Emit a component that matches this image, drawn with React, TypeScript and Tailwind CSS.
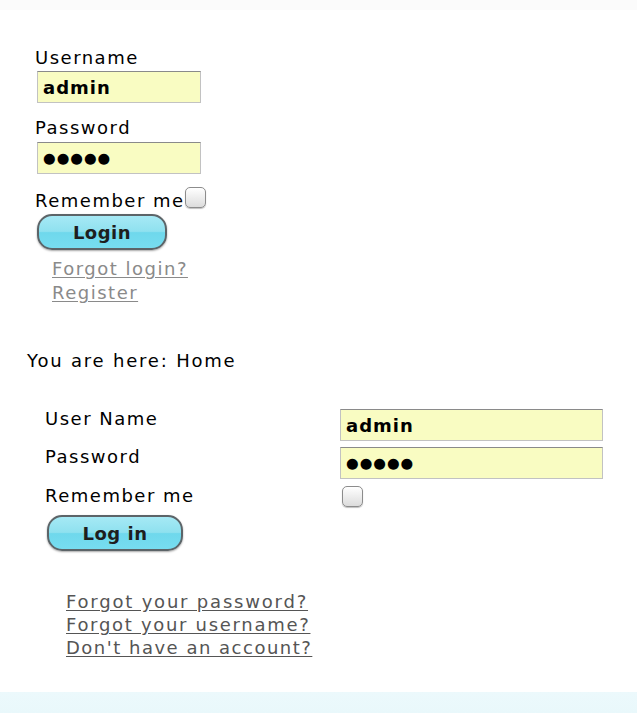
import React from 'react';

const font = "font-['DejaVu_Sans',sans-serif]";

const fieldClass =
  'h-[32px] bg-[#f9fcc2] border border-[#c2c2c2] border-t-[#8a8a8a] pl-[5px] text-[18px] font-bold text-black tracking-[1px] outline-none';

const checkClass =
  'appearance-none w-[21px] h-[21px] rounded-[5px] border border-[#8c8c8c] bg-gradient-to-b from-white to-[#dcdcdc] shadow-[0_1px_1px_rgba(0,0,0,0.25)]';

const AquaButton: React.FC<{ label: string; width: string }> = ({ label, width }) => (
  <button
    type="button"
    className={`${width} h-[36px] rounded-[15px] border-2 border-[#5c6468] bg-[linear-gradient(#a6e9f5_0%,#8fe1ef_48%,#6fd8ec_52%,#77ddf0_100%)] shadow-[0_1px_2px_rgba(0,0,0,0.35)] text-[18px] font-bold text-[#1e1e1e] tracking-[0.5px]`}
  >
    {label}
  </button>
);

const App: React.FC = () => {
  return (
    <div className={`${font} bg-white min-h-[713px] text-[18px] text-black tracking-[1.5px]`}>
      <div className="h-[10px] bg-[#fbfbfb]" />

      {/* module login */}
      <div className="pl-[35px] pt-[37px] flex flex-col items-start">
        <label className="leading-[22px]">Username</label>
        <input readOnly value="admin" className={`${fieldClass} mt-[2px] ml-[2px] w-[164px]`} />
        <label className="leading-[22px] mt-[14px]">Password</label>
        <input
          readOnly
          value="●●●●●"
          className={`${fieldClass} mt-[3px] ml-[2px] w-[164px] h-[31px] !text-[14.5px] !tracking-[1px]`}
        />
        <div className="flex items-start mt-[16px]">
          <span className="leading-[22px]">Remember me</span>
          <input type="checkbox" className={`${checkClass} -mt-[3px]`} />
        </div>
        <div className="mt-[2px] ml-[2px]">
          <AquaButton label="Login" width="w-[130px]" />
        </div>
        <div className="mt-[7px] ml-[17px] flex flex-col leading-[24px] text-[#8a8a8a]">
          <a className="underline underline-offset-[2px]">Forgot login?</a>
          <a className="underline underline-offset-[2px]">Register</a>
        </div>
      </div>

      {/* breadcrumb */}
      <div className="pl-[27px] mt-[45px] leading-[22px] tracking-[1.8px]">You are here: Home</div>

      {/* component login */}
      <div className="pl-[45px] mt-[36px]">
        <div className="flex items-start h-[38px]">
          <label className="w-[295px] leading-[22px]">User Name</label>
          <input readOnly value="admin" className={`${fieldClass} mt-[1px] w-[263px]`} />
        </div>
        <div className="flex items-start h-[39px]">
          <label className="w-[295px] leading-[22px]">Password</label>
          <input
            readOnly
            value="●●●●●"
            className={`${fieldClass} mt-[1px] w-[263px] h-[31px] !text-[14.5px] !tracking-[1px]`}
          />
        </div>
        <div className="flex items-start h-[22px]">
          <label className="w-[297px] leading-[22px]">Remember me</label>
          <input type="checkbox" className={`${checkClass} mt-[1px]`} />
        </div>
        <div className="mt-[8px] ml-[2px]">
          <AquaButton label="Log in" width="w-[136px]" />
        </div>
      </div>

      <div className="pl-[66px] mt-[39px] flex flex-col items-start leading-[23px] text-[#555]">
        <a className="underline underline-offset-[2px] tracking-[1.8px]">Forgot your password?</a>
        <a className="underline underline-offset-[2px] tracking-[1.7px]">Forgot your username?</a>
        <a className="underline underline-offset-[2px]">Don't have an account?</a>
      </div>

      <div className="mt-[33px] h-[21px] bg-[linear-gradient(#ecf9fc,#e9f8fb)]" />
    </div>
  );
};

export default App;
